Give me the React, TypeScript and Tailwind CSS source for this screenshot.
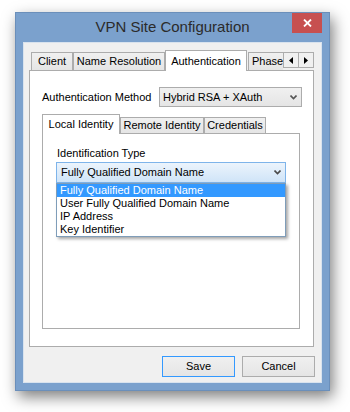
import React from "react";

const font = { fontFamily: '"Liberation Sans", Arial, sans-serif' };

function Chevron({ color = "#555" }: { color?: string }) {
  return (
    <svg width="7" height="5" viewBox="0 0 7 5">
      <path d="M0.5 0.5 L3.5 3.5 L6.5 0.5" fill="none" stroke={color} strokeWidth="1.6" />
    </svg>
  );
}

function Tab({
  label,
  width,
  active,
  height,
}: {
  label: string;
  width: number;
  active?: boolean;
  height: number;
}) {
  return (
    <div
      style={{ width, height }}
      className={`flex items-center justify-center border border-b-0 border-[#acacac] text-[11px] leading-none whitespace-nowrap ${
        active ? "relative z-10 -mb-px bg-white" : "bg-gradient-to-b from-[#f0f0f0] to-[#e5e5e5]"
      }`}
    >
      {label}
    </div>
  );
}

function ArrowBtn({ dir }: { dir: "left" | "right" }) {
  return (
    <div className="flex h-[16px] w-[16px] items-center justify-center border border-[#acacac] bg-[#f0f0f0]">
      <svg width="4" height="7" viewBox="0 0 4 7">
        {dir === "left" ? <path d="M4 0 L0 3.5 L4 7 Z" fill="#000" /> : <path d="M0 0 L4 3.5 L0 7 Z" fill="#000" />}
      </svg>
    </div>
  );
}

function Button({ label, focused }: { label: string; focused?: boolean }) {
  return (
    <div
      className={`flex h-[21px] w-[73px] items-center justify-center border bg-gradient-to-b from-[#f0f0f0] to-[#e5e5e5] text-[11px] ${
        focused ? "border-[#3399ff]" : "border-[#acacac]"
      }`}
    >
      {label}
    </div>
  );
}

const options = [
  "Fully Qualified Domain Name",
  "User Fully Qualified Domain Name",
  "IP Address",
  "Key Identifier",
];

export default function App() {
  return (
    <div className="h-[412px] w-[350px] bg-white pl-[15px] pt-[12px] text-black" style={font}>
      <div className="flex h-[379px] w-[315px] flex-col border border-[#6b8fba] bg-[#7ba1cd] shadow-[3px_6px_14px_rgba(0,0,0,0.5)]">
        {/* Title bar */}
        <div className="relative flex h-[29px] items-center justify-center">
          <span className="text-[15px] text-[#2b2b2b]">VPN Site Configuration</span>
          <div className="absolute right-[7px] top-0 flex h-[20px] w-[30px] items-center justify-center bg-[#c75050]">
            <svg width="9" height="8" viewBox="0 0 9 8">
              <path d="M1 0.5 L8 7.5 M8 0.5 L1 7.5" stroke="#fff" strokeWidth="1.8" />
            </svg>
          </div>
        </div>

        {/* Client area */}
        <div className="mx-[7px] mb-[7px] flex flex-1 flex-col border border-[#d9e3ee] bg-[#f0f0f0] pt-[7px]">
          <div className="ml-[5px] w-[285px]">
            {/* Tab strip */}
            <div className="flex h-[20px] items-end">
              <div className="w-[2px]" />
              <Tab label="Client" width={42} height={18} />
              <Tab label="Name Resolution" width={92} height={18} />
              <Tab label="Authentication" width={82} height={21} active />
              <div className="ml-px flex h-[18px] w-[35px] items-center whitespace-nowrap border-l border-t border-[#acacac] bg-gradient-to-b from-[#f0f0f0] to-[#e5e5e5] pl-[3px] text-[11px]">
                Phase
              </div>
              <div className="mb-[2px] flex">
                <ArrowBtn dir="left" />
                <div className="-ml-px">
                  <ArrowBtn dir="right" />
                </div>
              </div>
            </div>

            {/* Tab panel */}
            <div className="h-[277px] border border-[#acacac] bg-white">
              <div className="ml-[12px] mt-[16px] flex items-center">
                <span className="w-[117px] text-[11px]">Authentication Method</span>
                <div className="flex h-[20px] w-[143px] items-center justify-between border border-[#acacac] bg-gradient-to-b from-[#f0f0f0] to-[#e5e5e5] pl-[3px] pr-[4px] text-[11px]">
                  <span>Hybrid RSA + XAuth</span>
                  <Chevron />
                </div>
              </div>

              {/* Inner tab control */}
              <div className="ml-[12px] mt-[7px] w-[258px]">
                <div className="flex h-[19px] items-end">
                  <Tab label="Local Identity" width={78} height={20} active />
                  <Tab label="Remote Identity" width={84} height={16} />
                  <Tab label="Credentials" width={62} height={16} />
                </div>
                <div className="h-[196px] border border-[#acacac] bg-white">
                  <div className="ml-[14px] mt-[13px] text-[11px] leading-[13px]">Identification Type</div>
                  <div className="relative ml-[13px] mt-[2px] w-[230px]">
                    <div className="flex h-[21px] items-center justify-between border border-[#7eb4ea] bg-gradient-to-b from-[#ecf4fc] to-[#cfe4f8] pl-[4px] pr-[4px] text-[11px]">
                      <span>Fully Qualified Domain Name</span>
                      <Chevron color="#4a4a4a" />
                    </div>
                    <div className="absolute left-0 top-full z-20 w-[230px] border border-[#7f9db9] bg-white shadow-[2px_2px_3px_rgba(0,0,0,0.35)]">
                      {options.map((o, i) => (
                        <div
                          key={o}
                          className={`h-[13px] pl-[3px] text-[11px] leading-[13px] ${
                            i === 0 ? "bg-[#3399ff] text-white" : ""
                          }`}
                        >
                          {o}
                        </div>
                      ))}
                    </div>
                  </div>
                </div>
              </div>
            </div>
          </div>

          {/* Buttons */}
          <div className="mr-[6px] mt-[9px] flex justify-end gap-[7px]">
            <Button label="Save" focused />
            <Button label="Cancel" />
          </div>
        </div>
      </div>
    </div>
  );
}
